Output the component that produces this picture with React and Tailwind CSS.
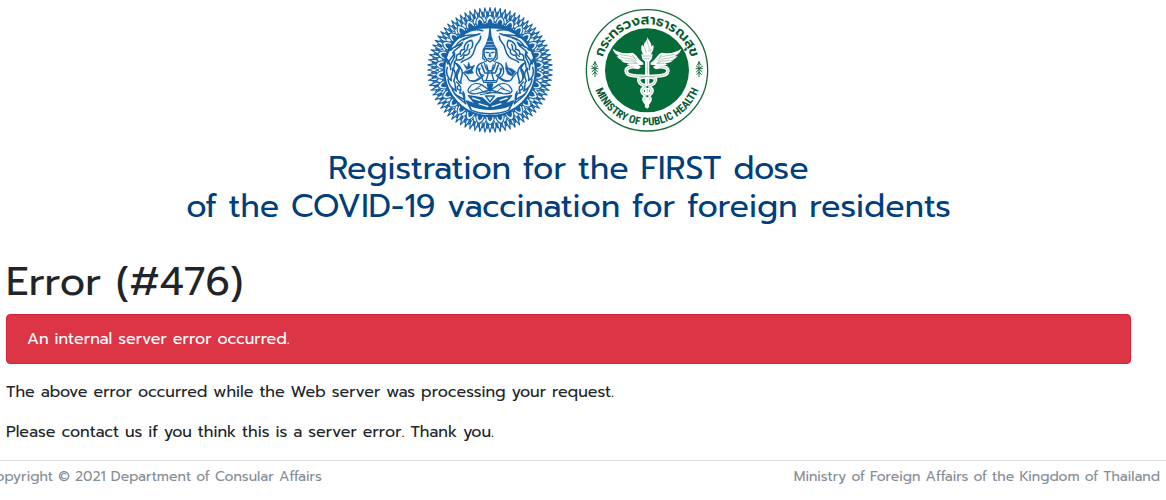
import React from 'react';

const polar = (cx, cy, r, deg) => {
  const a = (deg * Math.PI) / 180;
  return `${(cx + r * Math.cos(a)).toFixed(1)} ${(cy + r * Math.sin(a)).toFixed(1)}`;
};

// closed zigzag between two radii
const zigzag = (cx, cy, outer, inner, teeth, shift = 0) => {
  const step = 360 / teeth;
  const points = [];
  for (let i = 0; i < teeth; i++) {
    points.push(polar(cx, cy, outer, (i + shift) * step));
    points.push(polar(cx, cy, inner, (i + shift + 0.5) * step));
  }
  return `M${points.join('L')}Z`;
};

const petals = Array.from({ length: 30 }, (_, i) => i * 12);

function Flames() {
  return (
    <g strokeWidth="4.5" strokeLinecap="round" strokeLinejoin="round" fill="none">
      <path d="M188 92C164 84 138 94 122 112C144 98 158 110 180 101C160 112 146 106 130 120" />
      <path d="M118 113C102 119 91 135 92 151C104 132 114 142 128 127C122 145 109 141 98 159" />
      <path d="M88 148C76 164 76 180 84 192C88 174 99 174 103 158C109 174 94 180 91 199" />
      <path d="M155 121C137 124 130 139 134 149C126 146 119 153 121 163C112 160 106 168 110 180C124 182 133 174 132 165C143 169 152 159 148 149C160 144 160 130 155 121Z" />
      <path d="M182 109C184 122 171 128 167 138C163 152 163 160 153 170C143 180 133 178 124 187" />
      <path d="M145 134C139 143 147 148 137 153C130 156 133 163 122 169" />
      <path d="M82 202C76 218 82 234 94 242C90 225 101 221 98 205C111 217 107 231 101 243" />
      <path d="M104 188C116 196 121 208 113 221C107 234 114 244 123 250C119 235 131 228 126 213C122 202 116 192 104 188Z" />
      <path d="M84 238C86 256 96 266 109 273C102 260 109 252 102 244" />
      <path d="M110 246C122 256 126 268 119 279C128 277 133 287 132 299C123 291 115 291 106 283" />
      <path d="M96 266C103 287 119 296 137 311C129 295 139 287 129 275" />
      <path d="M107 181C98 190 107 201 98 210M115 207C108 217 105 227 112 237M116 257C108 260 111 268 118 270" />
      <path d="M143 113C128 115 113 127 106 141M82 178C88 190 93 193 92 209" />
    </g>
  );
}

function ForeignAffairsEmblem() {
  return (
    <svg viewBox="15 0 390 420" className="h-[140px] w-[130px]" role="img" aria-label="Ministry of Foreign Affairs emblem" fill="none" stroke="#1762a5">
      <circle cx="210" cy="210" r="168" fill="#eaf4fd" stroke="none" />
      <path d={zigzag(210, 210, 187, 160, 76)} fill="#f4faff" strokeWidth="3.5" strokeLinejoin="round" />
      <path d={zigzag(210, 210, 176, 153, 76, 0.5)} strokeWidth="3" />
      <circle cx="210" cy="210" r="144" fill="#d9eafa" strokeWidth="5" />
      {petals.map(deg => (
        <g key={deg} transform={`rotate(${deg} 210 210)`}>
          <path d="M198 71C196 58 202 51 210 46C218 51 224 58 222 71Z" fill="#e6f2fc" strokeWidth="3" />
          <path d="M204 70C204 63 206 60 210 57C214 60 216 63 216 70Z" fill="#1762a5" strokeWidth="3" />
        </g>
      ))}
      <circle cx="210" cy="211" r="137" fill="#f4faff" strokeWidth="6" />
      <path d="M134 97C176 70 244 70 286 97C242 80 178 80 134 97Z" fill="#1762a5" strokeWidth="2" />

      <Flames />
      <g transform="translate(420 0) scale(-1 1)">
        <Flames />
      </g>

      {/* pedestal */}
      <g strokeWidth="4" strokeLinejoin="round">
        <path d="M139 303C165 312 185 321 210 321C235 321 255 312 281 303L267 330C234 346 185 346 153 330Z" fill="#1762a5" />
        <path d="M151 319C187 334 233 334 269 319L264 329C229 342 191 342 156 329Z" fill="#f4faff" stroke="none" />
        <path d="M145 287L187 294L210 314L233 294L275 287L256 309L210 325L164 309Z" fill="#1762a5" />
        <path d="M157 294L181 302M263 294L239 302M176 311L205 320M244 311L215 320" stroke="#f4faff" strokeWidth="4" />
        <path d="M197 288L210 306L223 288Z" fill="#d9eafa" />
      </g>

      {/* seated deity */}
      <g strokeWidth="4" strokeLinecap="round" strokeLinejoin="round">
        <path d="M172 200C177 187 193 190 201 181H219C227 190 243 187 248 200L238 224L229 247H191L182 224Z" fill="#f4faff" />
        <path d="M172 200C165 216 172 229 181 232C165 246 147 249 142 231L130 218M248 200C255 216 248 229 239 232C255 246 273 249 278 231L290 218" />
        <path d="M180 205C174 219 180 224 191 226C179 239 165 247 155 242M240 205C246 219 240 224 229 226C241 239 255 247 265 242" />
        <path d="M148 263C137 277 151 283 171 281L208 270L184 254C170 248 155 250 148 263ZM272 263C283 277 269 283 249 281L212 270L236 254C250 248 265 250 272 263Z" fill="#f4faff" />
        <path d="M151 274L178 265L190 276L244 280M269 274L242 265L230 276L181 284M182 257L167 267M238 257L253 267" strokeWidth="3" />
        <path d="M202 252H218L214 268L210 274L206 268Z" fill="#1762a5" />
        <path d="M194 191C196 205 203 213 210 213C217 213 224 205 226 191M200 195C206 211 206 224 199 240M220 195C214 211 214 224 221 240M194 219H226M194 242H226" />
        <path d="M185 195L193 216M235 195L227 216" strokeWidth="5" />
        <path d="M194 143C188 166 194 179 210 186C226 179 232 166 226 143Z" fill="#eaf4fd" />
        <path d="M191 147H229L221 134L217 121L213 110L210 84L207 110L203 121L199 134Z" fill="#1762a5" />
        <path d="M201 134H219M203 124H217M197 142H223" stroke="#d9eafa" strokeWidth="2" />
        <path d="M190 148L188 175L194 180M230 148L232 175L226 180" />
        <path d="M198 157L206 158M214 158L222 157M210 160L208 168H212M204 175C208 178 212 178 216 175" strokeWidth="4" />
      </g>

      {/* items held in the raised hands */}
      <path d="M131 193L142 202L146 187L151 201L164 196L156 211L160 219L144 222L132 217L141 209Z" fill="#1762a5" strokeWidth="2" />
      <path d="M258 187L263 203L276 207L287 215L276 228L263 222L257 206Z" fill="#1762a5" strokeWidth="2" />
      <path d="M139 212L153 205M264 209L275 219" stroke="#d9eafa" strokeWidth="3" />
    </svg>
  );
}

function Wing() {
  return (
    <g>
      <path d="M190 188C174 180 169 158 154 158C133 163 115 157 98 146C101 158 111 166 120 169C114 169 112 168 109 167C115 177 124 180 132 180C128 182 125 181 122 180C130 190 140 190 147 188C144 191 142 192 139 192C151 201 173 196 190 194Z" fill="#fff" />
      <path d="M117 162C137 170 151 163 165 177M121 171C139 178 151 171 167 185M134 181C148 185 155 179 171 190M148 190L173 190M157 164L169 182" fill="none" stroke="#8dad9c" strokeWidth="2" />
    </g>
  );
}

function Kanok() {
  return (
    <g fill="none" stroke="#176b3e" strokeWidth="3" strokeLinecap="round">
      <path d="M45 184V230" />
      <path d="M45 187L39 195M45 187L50 195M35 199L45 205L53 198M35 206H54M36 215L45 208L53 216M38 223L45 216L51 223" />
    </g>
  );
}

function PublicHealthEmblem() {
  return (
    <svg viewBox="6 0 390 420" className="h-[140px] w-[130px]" role="img" aria-label="Ministry of Public Health emblem">
      <defs>
        <path id="arc-top" d="M63 211A138 138 0 0 1 339 211" />
        <path id="arc-bottom" d="M35 210A166 166 0 0 0 367 210" />
      </defs>
      <circle cx="201" cy="211" r="182" fill="#fff" stroke="#176b3e" strokeWidth="4" />
      <circle cx="201" cy="211" r="126" fill="#056b38" />

      <text fill="#075b30" fontSize="41" fontWeight="600" textAnchor="middle" className="font-['Prompt','Noto_Sans_Thai',sans-serif]">
        <textPath href="#arc-top" startOffset="50%">กระทรวงสาธารณสุข</textPath>
      </text>
      <text fill="#075b30" fontSize="33" fontWeight="700" textAnchor="middle" className="font-['Roboto_Condensed','Roboto',sans-serif]">
        <textPath href="#arc-bottom" startOffset="50%">MINISTRY OF PUBLIC HEALTH</textPath>
      </text>

      <Kanok />
      <g transform="translate(402 0) scale(-1 1)">
        <Kanok />
      </g>
      <Wing />
      <g transform="translate(402 0) scale(-1 1)">
        <Wing />
      </g>

      {/* torch with its flame */}
      <path d="M202 110C205 121 216 127 214 140L220 134C223 148 216 157 212 164H191C185 157 181 146 186 134L192 140C189 126 204 123 202 110Z" fill="#fff" />
      <path d="M202 121C201 134 211 139 206 155M195 138C192 147 198 150 198 158M214 145L210 157" fill="none" stroke="#8dad9c" strokeWidth="2" />
      <path d="M184 163H218L215 177L208 185V286L202 329L195 286V185L187 177Z" fill="#fff" />
      <path d="M188 168H214M191 176H211M202 184V278" stroke="#8dad9c" strokeWidth="2" />

      {/* twin serpents */}
      <g fill="none" strokeLinecap="round">
        <g stroke="#fff" strokeWidth="11">
          <path d="M174 202C152 196 134 204 140 218C149 239 249 217 222 249C216 258 183 260 186 274C189 289 213 286 210 300C207 309 198 310 202 319" />
          <path d="M228 202C250 196 270 204 262 218C253 239 155 217 180 249C186 258 219 260 216 274C213 289 189 286 192 300C195 309 204 310 200 319" />
        </g>
        <g stroke="#8dad9c" strokeWidth="2">
          <path d="M174 202C152 196 134 204 140 218C149 239 249 217 222 249C216 258 183 260 186 274C189 289 213 286 210 300" />
          <path d="M228 202C250 196 270 204 262 218C253 239 155 217 180 249C186 258 219 260 216 274C213 289 189 286 192 300" />
        </g>
      </g>
      <path d="M158 200L171 194L184 201L172 207ZM244 200L231 194L218 201L230 207Z" fill="#fff" />
      <circle cx="202" cy="261" r="3" fill="#056b38" />
      <circle cx="202" cy="289" r="3" fill="#056b38" />
    </svg>
  );
}

export default function App() {
  return (
    <div className="overflow-x-hidden bg-white font-['Prompt','Inter',sans-serif] text-base text-[#212529]">
      <div className="pr-[35px] pl-1.5">
        <header className="text-center">
          <div className="flex justify-center gap-[27px]">
            <ForeignAffairsEmblem />
            <PublicHealthEmblem />
          </div>
          <h2 className="mt-2.5 text-[32px] leading-[38px] text-[#003e7c]">
            Registration for the FIRST dose
            <br />
            of the COVID-19 vaccination for foreign residents
          </h2>
        </header>

        <main className="mt-8 pb-4">
          <h1 className="text-[40px] leading-[48px]">Error (#476)</h1>
          <div role="alert" className="mt-2 rounded border border-[#d32535] bg-[#dc3545] px-5 py-3 leading-6 text-white">
            An internal server error occurred.
          </div>
          <p className="mt-4 leading-6">The above error occurred while the Web server was processing your request.</p>
          <p className="mt-4 leading-6">Please contact us if you think this is a server error. Thank you.</p>
        </main>
      </div>

      <footer className="flex justify-between border-t border-[#dee2e6] pt-1 pr-1.5 text-sm leading-6 text-[#868e96]">
        <p className="-ml-3.5">Copyright © 2021 Department of Consular Affairs</p>
        <p>Ministry of Foreign Affairs of the Kingdom of Thailand</p>
      </footer>
    </div>
  );
}
